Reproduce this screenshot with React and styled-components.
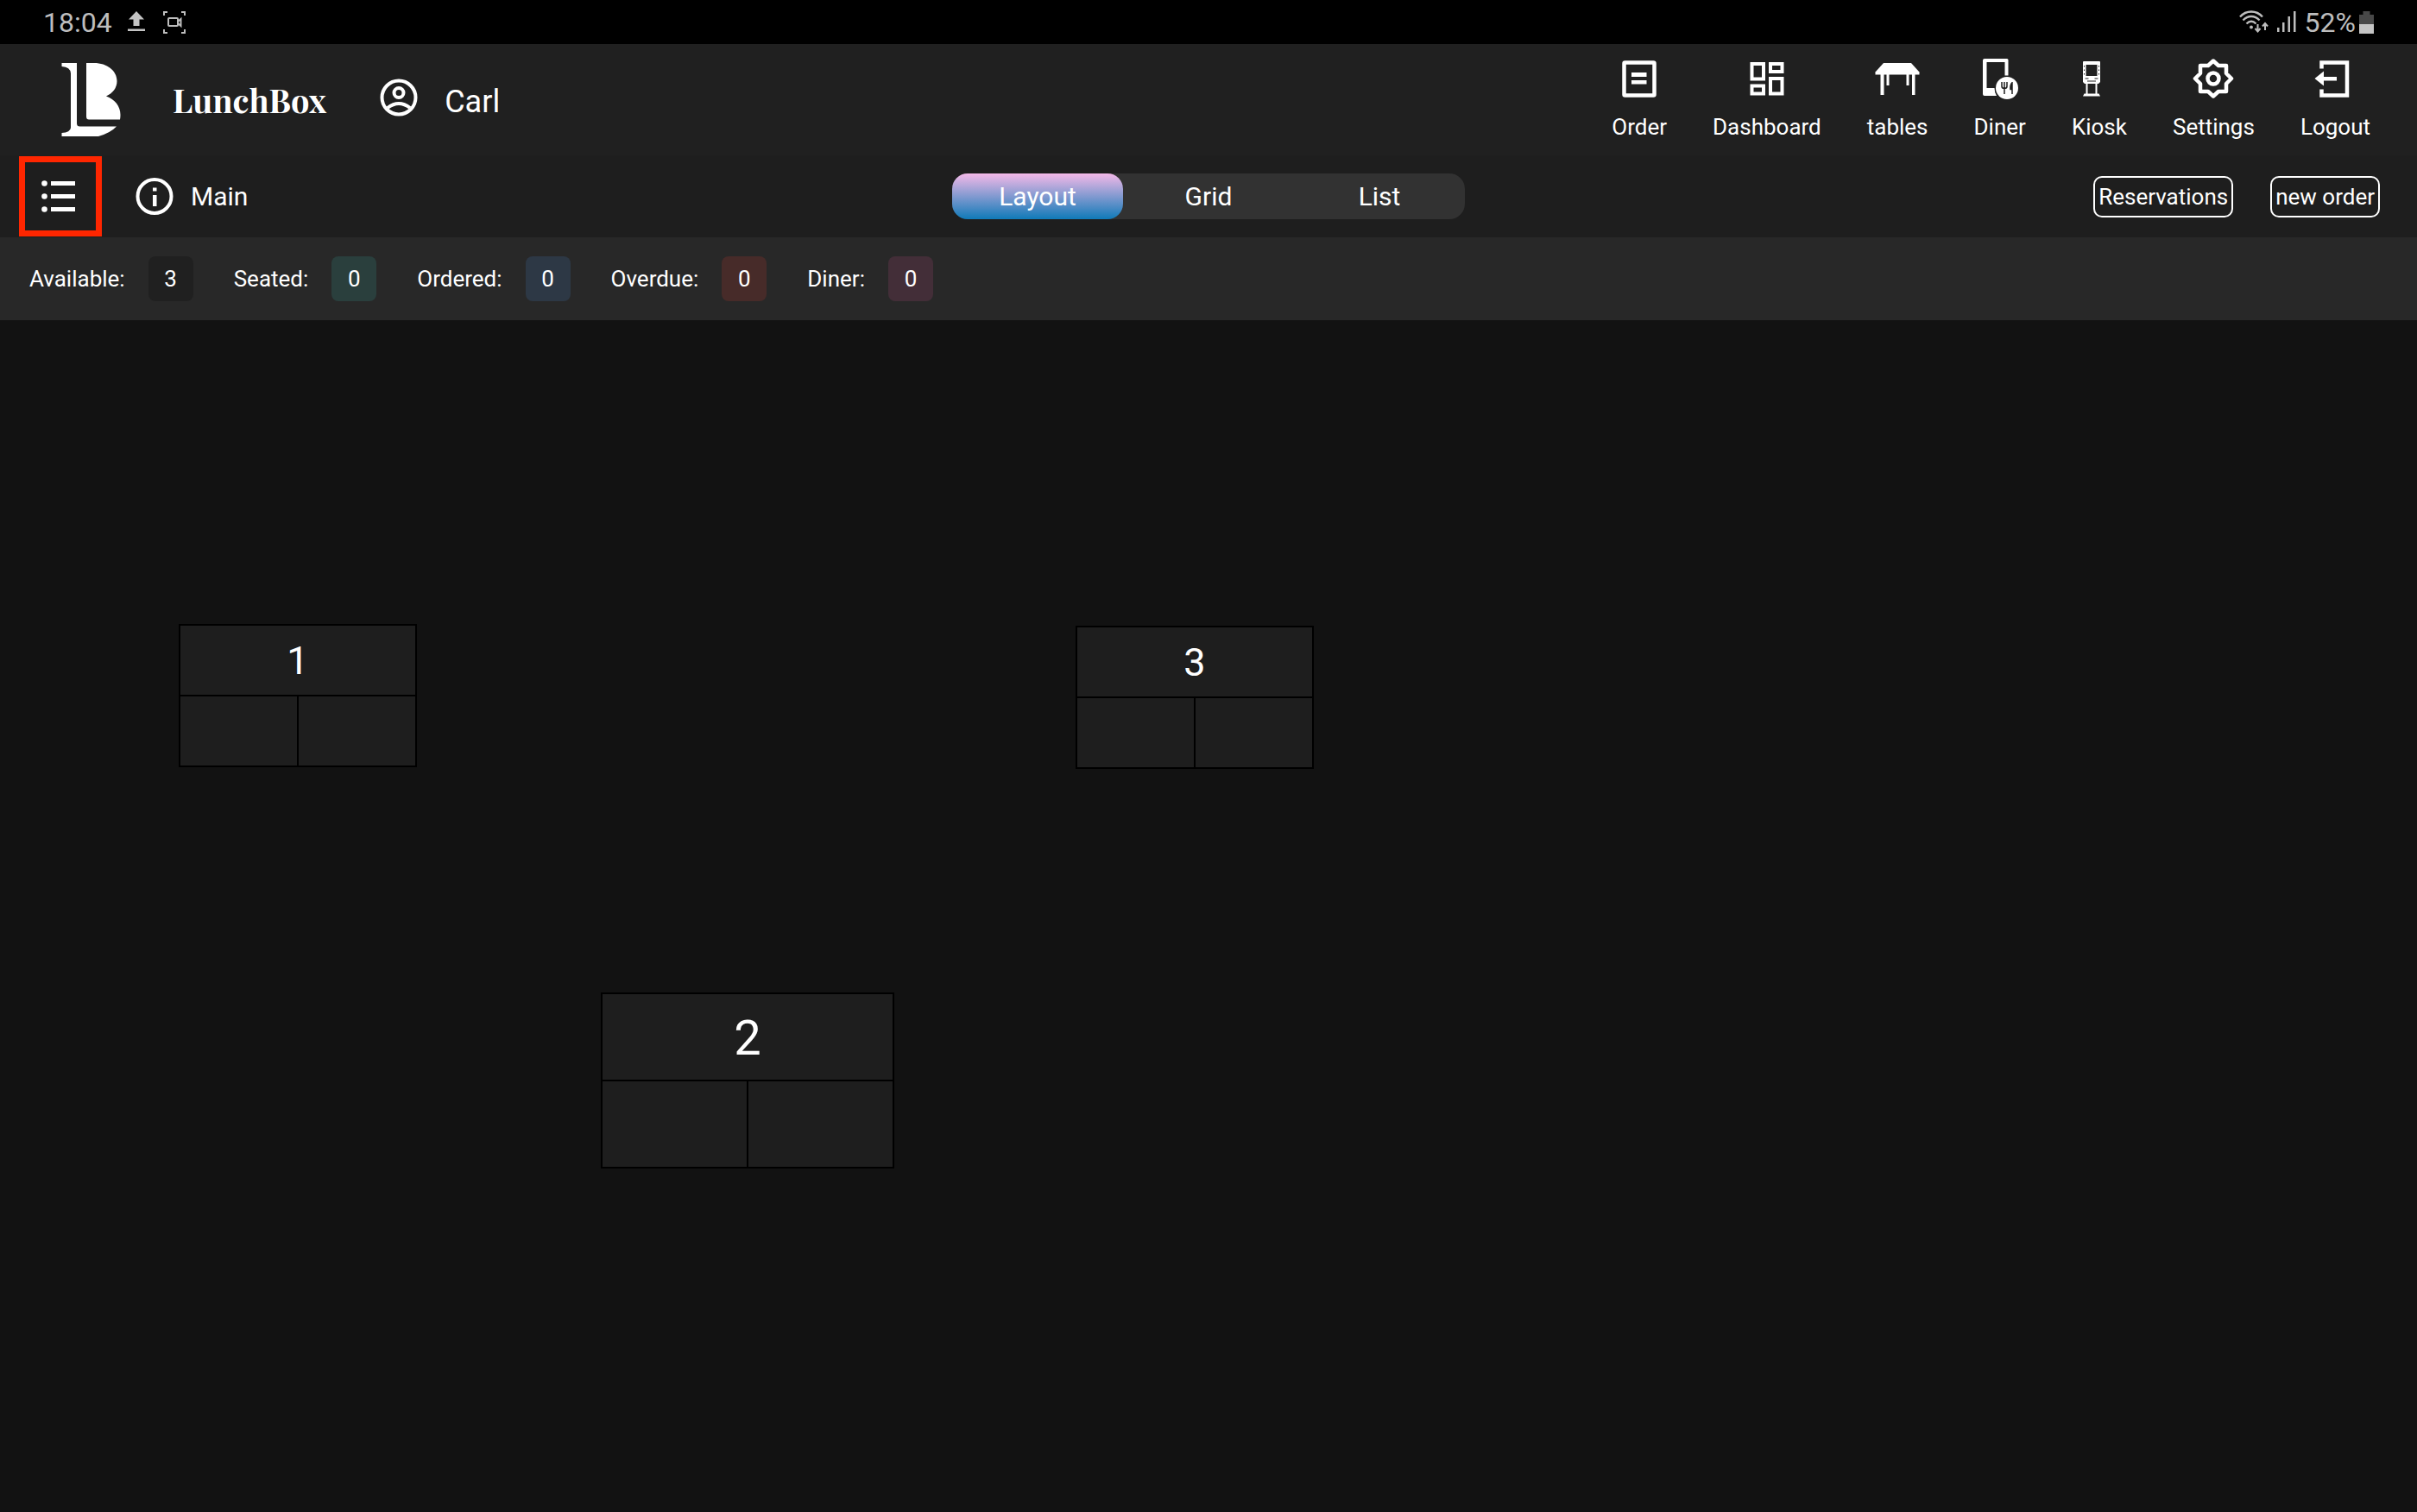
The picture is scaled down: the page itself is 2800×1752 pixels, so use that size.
import { useState } from "react";
import styled, { createGlobalStyle } from "styled-components";

const GlobalStyle = createGlobalStyle`
  * {
    box-sizing: border-box;
  }

  body {
    margin: 0;
    background: #121212;
    color: #ffffff;
    font-family: Roboto, "Open Sans", sans-serif;
  }

  button {
    margin: 0;
    padding: 0;
    border: none;
    background: none;
    color: inherit;
    font: inherit;
    cursor: pointer;
  }

  svg {
    display: block;
    flex: none;
  }
`;

const Page = styled.div`
  display: flex;
  flex-direction: column;
  min-height: 100vh;
`;

const StatusBar = styled.div`
  display: flex;
  align-items: center;
  justify-content: space-between;
  height: 51px;
  padding: 0 50px;
  background: #000000;
  color: #bdbdbd;
  font-size: 32px;
  line-height: 38px;
`;

const StatusGroup = styled.div`
  display: flex;
  align-items: center;
  gap: ${(props) => props.$gap}px;
`;

const Header = styled.header`
  display: flex;
  align-items: center;
  height: 129px;
  padding: 0 54px 0 71px;
  background: #202020;
`;

const Brand = styled.div`
  display: flex;
  align-items: center;
  gap: 60px;
  font-family: "Playfair Display", "Liberation Serif", serif;
  font-size: 38px;
  font-weight: bold;
  line-height: 48px;
`;

const User = styled.button`
  display: flex;
  align-items: flex-start;
  gap: 31px;
  margin-left: 62px;
  padding-top: 4px;
  font-size: 36px;
  line-height: 54px;
`;

const Nav = styled.nav`
  display: flex;
  gap: 53px;
  margin-left: auto;
  padding-bottom: 3px;
`;

const NavButton = styled.button`
  display: flex;
  flex-direction: column;
  align-items: center;
  gap: 17px;
  font-size: 26px;
  line-height: 30px;
`;

const Toolbar = styled.div`
  display: grid;
  grid-template-columns: 1fr auto 1fr;
  align-items: center;
  height: 95px;
  padding: 0 22px;
  background: #1e1e1e;
`;

const ToolbarStart = styled.div`
  display: flex;
  align-items: center;
`;

const ToolbarEnd = styled.div`
  display: flex;
  justify-content: flex-end;
  gap: 43px;
  padding-right: 21px;
`;

const MenuButton = styled.button`
  display: flex;
  align-items: center;
  justify-content: center;
  width: 96px;
  height: 93px;
  padding-right: 4px;
  border: 7px solid #ff2600;
`;

const AreaButton = styled.button`
  display: flex;
  align-items: center;
  gap: 20px;
  margin-left: 39px;
  font-size: 30px;
  line-height: 36px;
`;

const Segments = styled.div`
  display: flex;
  border-radius: 18px;
  background: #323232;
`;

const Segment = styled.button`
  width: 198px;
  height: 53px;
  border-radius: 18px;
  background: ${(props) => (props.$active ? "linear-gradient(#f4b9e8, #0f7ab8)" : "none")};
  font-size: 30px;
  line-height: 36px;
`;

const OutlineButton = styled.button`
  height: 48px;
  padding: 0 4px;
  border: 2px solid #ffffff;
  border-radius: 10px;
  font-size: 26px;
  line-height: 30px;
`;

const Stats = styled.div`
  display: flex;
  align-items: center;
  gap: 47px;
  height: 96px;
  padding: 0 34px;
  background: #282828;
  font-size: 26px;
  line-height: 30px;
`;

const Stat = styled.div`
  display: flex;
  align-items: center;
  gap: 27px;
`;

const Count = styled.span`
  display: flex;
  align-items: center;
  justify-content: center;
  width: 52px;
  height: 52px;
  border-radius: 8px;
  background: ${(props) => props.$color};
`;

const Floor = styled.main`
  position: relative;
  flex: 1;
  min-height: 1000px;
`;

const Table = styled.button`
  position: absolute;
  left: ${(props) => props.$x}px;
  top: ${(props) => props.$y}px;
  display: grid;
  grid-template-columns: 1fr 1fr;
  grid-template-rows: 1fr 1fr;
  gap: 2px;
  width: ${(props) => (props.$large ? 340 : 276)}px;
  height: ${(props) => (props.$large ? 204 : 166)}px;
  border: 2px solid #000000;
  background: #000000;
  font-size: ${(props) => (props.$large ? 56 : 45)}px;
  line-height: 60px;
`;

const TableName = styled.span`
  grid-column: 1 / 3;
  display: flex;
  align-items: center;
  justify-content: center;
  padding-top: 2px;
  background: #1e1e1e;
`;

const Seat = styled.span`
  background: #1e1e1e;
`;

function Logo() {
  return (
    <svg width="69" height="86" viewBox="0 0 69 86" fill="#fff">
      <path d="M.5 0h17.500v70q0 3.500 3.500 3.500h42.500Q57 81 43 85H.5v-4q10-.500 10.500-6V12Q10.500 4.500.5 4z" />
      <path d="M29 0h9c15 0 26.500 9 26.500 21 0 8-5 14-12.500 17.500C62 42 68.500 50 68.500 60q0 3-.500 5.500H32q-3 0-3-3.500z" />
    </svg>
  );
}

function UploadIcon() {
  return (
    <svg width="20" height="25" viewBox="0 0 20 25" fill="#c4c4c4">
      <path d="M10 0l9 9.500h-5.500V17h-7V9.500H1zM0 20.500h20V23H0z" />
    </svg>
  );
}

function CaptureIcon() {
  return (
    <svg width="30" height="26" viewBox="-3 0 30 26" fill="none" stroke="#bdbdbd" strokeWidth="2">
      <path d="M1 5V1h4M21 1h4v4M25 21v4h-4M5 25H1v-4" />
      <rect x="6" y="8" width="11" height="9" rx="1" />
      <path d="M17 12l3.500-3v8L17 14" />
    </svg>
  );
}

function WifiIcon() {
  return (
    <svg width="34" height="27" viewBox="0 0 34 27" fill="none" stroke="#bdbdbd" strokeWidth="2.400">
      <path d="M1 7.500C8-.500 20-.500 27 7.500M4.500 11.500C10 5.500 18 5.500 23.500 11.500M8.500 15.500q5.500-5.500 11 0" />
      <circle cx="14" cy="19.500" r="1.900" fill="#bdbdbd" stroke="none" />
      <path d="M21.500 16v8M18.500 21l3 3.500 3-3.500M30 23v-8M27 18.500l3-3.500 3 3.500" strokeWidth="2" />
    </svg>
  );
}

function SignalIcon() {
  return (
    <svg width="22" height="25" viewBox="0 0 22 25" fill="#bdbdbd">
      <path d="M0 19h2.500v5H0zM6 13h2.500v11H6zM12.500 6H15v18h-2.500zM19 0h2.500v24H19z" />
    </svg>
  );
}

function BatteryIcon() {
  return (
    <svg width="17" height="26" viewBox="0 0 17 26">
      <path d="M4.500 0h8v4H17v22H0V4h4.500z" fill="#484848" />
      <path d="M0 15h17v11H0z" fill="#c4c4c4" />
    </svg>
  );
}

function UserIcon() {
  return (
    <svg width="44" height="44" viewBox="0 0 44 44" fill="none" stroke="#fff" strokeWidth="4">
      <circle cx="22" cy="22" r="19.500" />
      <circle cx="22" cy="16.500" r="5.500" />
      <path d="M9 34q13-10 26 0" />
    </svg>
  );
}

function ListIcon() {
  return (
    <svg width="40" height="38" viewBox="0 0 40 38" fill="#fff">
      <circle cx="3.500" cy="3.500" r="3.300" />
      <circle cx="3.500" cy="18.500" r="3.300" />
      <circle cx="3.500" cy="33.500" r="3.300" />
      <path d="M11 1h28v5H11zM11 16h28v5H11zM11 31h28v5H11z" />
    </svg>
  );
}

function InfoIcon() {
  return (
    <svg width="44" height="44" viewBox="0 0 44 44">
      <circle cx="22" cy="21.500" r="19.500" fill="none" stroke="#fff" strokeWidth="4" />
      <path d="M20 11.500h4.500v4H20zM20 20h4.500v13H20z" fill="#fff" />
    </svg>
  );
}

function OrderIcon() {
  return (
    <svg width="48" height="48" viewBox="0 0 48 48">
      <rect x="6.500" y="5.500" width="35" height="38" rx="1" fill="none" stroke="#fff" strokeWidth="4.500" />
      <path d="M15 17h17.500v5H15zM15 26h17.500v4.500H15z" fill="#fff" />
    </svg>
  );
}

function DashboardIcon() {
  return (
    <svg width="48" height="48" viewBox="0 0 48 48" fill="none" stroke="#fff" strokeWidth="4">
      <path d="M6.500 7h13.500v17.500H6.500zM28 7h13.500v9H28zM6.500 32.500h13.500v9H6.500zM28 24h13.500v17.500H28z" />
    </svg>
  );
}

function TablesIcon() {
  return (
    <svg width="52" height="48" viewBox="0 0 52 48" fill="#fff">
      <path d="M10 6h32l9.500 10.500v3H.500v-3z" />
      <path d="M6.500 19h4v24h-4zM13.500 19h3v13h-3zM36.500 19h3v13h-3zM43 19h3.500v24H43z" />
    </svg>
  );
}

function DinerIcon() {
  return (
    <svg width="48" height="48" viewBox="0 0 48 48">
      <path
        d="M6 1h26q1.500 0 1.500 1.500V20.500h-4V5H8.500v30h9q0 5 2.500 9H6q-2 0-2-2V3q0-2 2-2z"
        fill="#fff"
      />
      <circle cx="32" cy="35" r="13" fill="#fff" />
      <g fill="none" stroke="#202020" strokeWidth="1.500">
        <path d="M26 28v5q0 2.500 3 2.500t3-2.500v-5M29 28v14" />
        <path d="M38 28v14M38 28.500q-2.500 3-2 8h2" fill="#202020" />
      </g>
    </svg>
  );
}

function KioskIcon() {
  return (
    <svg width="48" height="48" viewBox="0 0 48 48">
      <path d="M6 4h18q1 0 1 1v23l-2 2H7l-2-2V5q0-1 1-1z" fill="#fff" />
      <path d="M8.500 8h13v13h-13zM7.500 23.500h4v1h-4zM18.500 23.500h4v1h-4zM10 26.500h10v1H10z" fill="#202020" />
      <path d="M6.500 9v12M23.500 9v12" stroke="#202020" strokeDasharray="1.500 3" />
      <path d="M9.500 29v13M20.500 29v13" stroke="#fff" strokeWidth="2" />
      <path d="M6.500 41.500h17l1.500 3H5z" fill="#fff" />
    </svg>
  );
}

function SettingsIcon() {
  return (
    <svg width="48" height="48" viewBox="0 0 48 48" fill="none" stroke="#fff" strokeWidth="4.500">
      <path
        d="M24 3.500l6 5.500h9v9l6 6-6 6v9h-9L24 44.500 18 39H9v-9l-6-6 6-6V9h9z"
        strokeLinejoin="round"
      />
      <circle cx="24" cy="24" r="6.500" />
    </svg>
  );
}

function LogoutIcon() {
  return (
    <svg width="48" height="48" viewBox="0 0 48 48">
      <path d="M8.500 12.500V5.500h29.500v38H8.500v-7" fill="none" stroke="#fff" strokeWidth="4.500" />
      <path d="M.500 24L11 15.500v6.500h15v4.500H11v6z" fill="#fff" />
    </svg>
  );
}

const navItems = [
  { label: "Order", icon: OrderIcon },
  { label: "Dashboard", icon: DashboardIcon },
  { label: "tables", icon: TablesIcon },
  { label: "Diner", icon: DinerIcon },
  { label: "Kiosk", icon: KioskIcon },
  { label: "Settings", icon: SettingsIcon },
  { label: "Logout", icon: LogoutIcon },
];

const stats = [
  { label: "Available:", count: 3, color: "#202020" },
  { label: "Seated:", count: 0, color: "#2a3f3d" },
  { label: "Ordered:", count: 0, color: "#2d3845" },
  { label: "Overdue:", count: 0, color: "#472b29" },
  { label: "Diner:", count: 0, color: "#432e38" },
];

const tables = [
  { name: "1", x: 207, y: 352 },
  { name: "3", x: 1246, y: 354 },
  { name: "2", x: 696, y: 779, large: true },
];

export default function App() {
  const [view, setView] = useState("Layout");

  return (
    <Page>
      <GlobalStyle />
      <StatusBar>
        <StatusGroup $gap={18}>
          18:04
          <UploadIcon />
          <CaptureIcon />
        </StatusGroup>
        <StatusGroup $gap={10}>
          <WifiIcon />
          <SignalIcon />
          <StatusGroup $gap={4}>
            52%
            <BatteryIcon />
          </StatusGroup>
        </StatusGroup>
      </StatusBar>

      <Header>
        <Brand>
          <Logo />
          LunchBox
        </Brand>
        <User>
          <UserIcon />
          Carl
        </User>
        <Nav>
          {navItems.map(({ label, icon: Icon }) => (
            <NavButton key={label}>
              <Icon />
              {label}
            </NavButton>
          ))}
        </Nav>
      </Header>

      <Toolbar>
        <ToolbarStart>
          <MenuButton aria-label="Menu">
            <ListIcon />
          </MenuButton>
          <AreaButton>
            <InfoIcon />
            Main
          </AreaButton>
        </ToolbarStart>
        <Segments>
          {["Layout", "Grid", "List"].map((name) => (
            <Segment key={name} $active={view === name} onClick={() => setView(name)}>
              {name}
            </Segment>
          ))}
        </Segments>
        <ToolbarEnd>
          <OutlineButton>Reservations</OutlineButton>
          <OutlineButton>new order</OutlineButton>
        </ToolbarEnd>
      </Toolbar>

      <Stats>
        {stats.map((stat) => (
          <Stat key={stat.label}>
            {stat.label}
            <Count $color={stat.color}>{stat.count}</Count>
          </Stat>
        ))}
      </Stats>

      <Floor>
        {tables.map((table) => (
          <Table key={table.name} $x={table.x} $y={table.y} $large={table.large}>
            <TableName>{table.name}</TableName>
            <Seat />
            <Seat />
          </Table>
        ))}
      </Floor>
    </Page>
  );
}
